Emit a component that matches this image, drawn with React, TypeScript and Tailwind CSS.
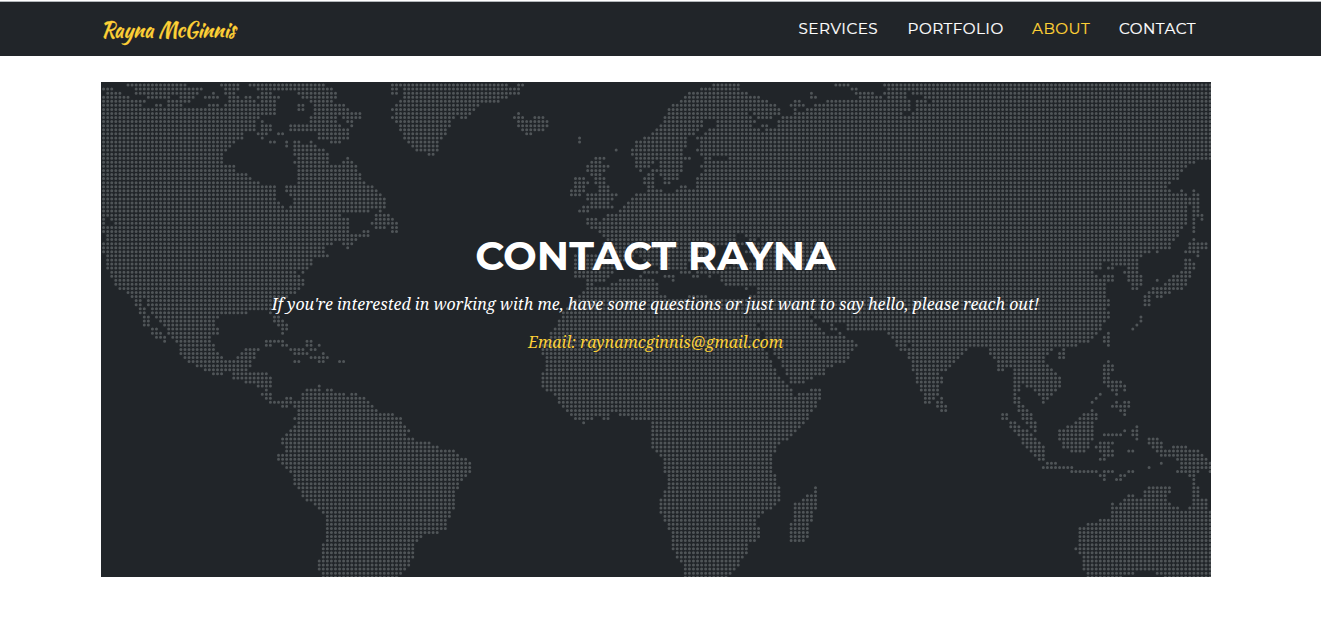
import React from "react";

type Tile = { x: number; y: number; row: number; runs: string };

const PITCH = 4.068;
const FIRST_X = 103.6;
const FIRST_Y = 85;

// Each tile lists its land spans row by row, at three units to a pixel from the tile's corner.
// Rows are separated by "/", spans by a space.
const tiles: Tile[] = [
  {
    x: 100, y: 80, row: 0,
    runs:
      "85-255 363-415 447-672 878-895/11-35 110-305 375-415 472-695 878-895/23-60 110-290 340 375-402 484-515 600-705 878-890/11-85 145-205 240-280 315-353 387-415 435-450 472-535 610-705/11-135 205-270 387-465 484-525 630-695/11-120 170-182 205-240 327-353 375-475 484-525 600-610 643-733 890/11-475 484-525 600-610 643-745 885/11-470 484-525 643-745 757-782/11-475 630-705 730-780 878-890/11-460 484 630-690 710 745-755 890/11-465 484-512 572-620 630-720 757/11-465 490-512 572-615 632-745 900/11-430 472-500 535-547 655-745/11-425 487 657-745/11-400 510-522 560 585-600 633 695-720/11-390 560 585-645/11-378 585-672/11-366 585-685/11-366 597-685 743/11-366 585-685 730-757/11-402 597-770/11-402 597-770/11-440 597-782/11-452 597-782/11-475 597-795/11-525 560-820/11-525 560-830/11-525 572-843/11-525 585-855/11-537 580-855/11-550 572-855/11-805 843/11-720 828-868/11 35-745 828-880/11 45-745 815-890/11-745 828-855 878-890/11-745 790-805 878-890/23-805/23-770/11-695 730-755",
  },
  {
    x: 380, y: 80, row: 0,
    runs:
      "37-380 415-427/37-50 72-420/37-50 72-415/72-380/60-355/48-295 880-895/37-285 868-895/48-270 415 868-895/37-220 245-258 403-427 464-490 856-895/48-208 415-500 856-895/60-208 415-500 844-895/60-195 427-490 832-895/72-195 440-452 820-895/72-183 598 795-895/84-172 598 770-895/96-172 770-895/108-172 709 758-895/147-160 758-895/648-672 770-895/636-660 770-820 844-895/623-685 770-808 844-895/623-672 782 820-895/636-660 808-820 844-895/587-610 648-672 795-820 856-890/587-623 648-672 795-820 856-865/587-610 660-685 808-820/575-610 660-685 808-845 890/575-598 623-709 770-895/623-697 758-895/636-685 745-895/611-697 733-895/598-623 721-895/685-895/623-650 672-895/623-895/636-895/660-895/672-895/684-895/700-895",
  },
  {
    x: 640, y: 80, row: 0,
    runs:
      "220-295 587-625 733-900/183-295 636-650 745-810 820-900/147-320 514 648-700 733-800 820-900/135-355 514-526 660-725 745-800 855-900/123-380 465-480 563-575 587-810 830-860 880-900/98-405 453-490 526-810 830-900/86-415 465 500-810 830-900/86-320 343-415 465-780 820-900/74-330 355-395 428-900/74-183 232-330 345 415-900/62-183 232-335 370-380 415-900/50-170 208-355 380-900/38-160 195-900/14-135 172-900/2-130 183-900/2-130 183-900/2-123 172 185-900/2-123 183-900/2-135 148 195-205 270-900/2-40 62-123 195-900/2-25 62-123 183-900/38-50 62-123 195 208-900/25-40 62-110 183-900/14-40 74-110 172-900/14-40 74-85 172-900/25-40 123-135 172-900/25-62 110-900/2-900/2-900/2-900/2-900/2-900/2-900/2-900/2-900/2-900/2-900/2-287 325-360 372-900/2-287 330-345 372-900/2-320 345-900",
  },
  {
    x: 920, y: 80, row: 0,
    runs:
      "2-870/2-870/2-870/12-870/2-20 40-870/2-870/2-870/2-870/2-870/2-870/2-870/2-870/2-870/2-870/2-870/2-870/2-870/2-870/2-870/2-822/2-797/2-785/2-775/2-772/2-748/2-740/2-748 785 822/2-797 822-834/2-797 810-834/2-797 810-834/2-797 822-834/2-797 822-834/2-797 822-846/2-797 822 846/2-797 822/2-785 822/2-775 822/2-772/2-760 822/2-750 808-860",
  },
  {
    x: 100, y: 240, row: 40,
    runs:
      "11-672 743/11-672/23-685/23-635/23-635/23-622/35-585 610/35-597/47-610/47-610/60-600/84-585/96-560/108-120 145-550/108-120 145-520/120-135 157-520/120-135 157-440 510/133-150 170-350 522-535/133-147 182-345 522-547/133-147 195-345 535-560/157-170 205-353 547-560/157-182 205-353 547/170-195 218-330/195 230-330 498-547 620-632/242-340 498-510 547-560 620-632 657/242-340 437-475 572-610 632-645/242-353 425-462 585-622 670/254-366 413-462 632-682/266-450 585-597 657-670 718-730/291-450/315-440/340-366 400-500/400-512/437-512/475-512 657/498 620-660 682-695/487-510 608-645 657-735 755-767/498-510 560-572 608-795/510-807/547-560 585-820",
  },
  {
    x: 400, y: 220, row: 39,
    runs:
      "610-1000 1060-1325/610-940 1000-1010 1070-1325/610-920 1040-1325/525-700 720-920 1060-1325/525-690 740-920 1080-1325/525-660 700-710 760-860 1000-1325/525-650 715-725 780-850 890-1325/525-640 740-770 840-870 890-1325/525-630 722 795-820 880-890 930 965-1325/562-610 660-760 820 965-1325/562-580 635-770 977-1010 1025-1325/562-765 1040 1075-1325/550-770 1075-1325/537-800 870-920 1050-1325/520-1325/510-1325/500-1325/488-1220 1235-1325/488-1060 1075-1225 1250-1325/476-1060 1075-1240 1270-1325/476-1062 1085-1245 1290-1300/464-1070 1090-1260 1290-1310/452-1075 1098-1270 1320/452-1080 1100-1325/440-1085 1110-1345/428-1085 1115-1350/428-1090 1120-1345/428-1095 1130-1345/440-1100 1135-1335/440-1110 1145-1320/440-1110 1150-1300/440-1120 1160-1275",
  },
  {
    x: 840, y: 220, row: 39,
    runs:
      "6-990 1050-1100/6-990 1050-1100/6-930 950 1038-1075/6-905 1075/6-892 1038-1050/6-783 820-892 1038-1062/6-783 808-820 868-892 1038-1062/6-758 856-892 1026-1050/6-770 795-820 868-905 1001-1050/6-783 795-820 868-905 952 989-1038/6-795 880-905 977-1038/6-795 880-892 940-1026/6-795 928-989/6-795 916-928 952-965/6-807 916-928/6-807 916-928/6-795/6-807/6-807 905/6-795 905/24-783 892/24-783 880/0 146-770 807/0-10 158-758 795-807/0-36 170-746 795-807/0-48 170-190 219-430 445-710 807/0-36 182-195 207-380 450-635 665/0-24 207-370 450-625 660-672/0-24 207-355 462-612 660-672/0-12 219-343 475-612 807/219-330 475-625 795-820/219-318 475-490 525-637 795-820/231-295 525-650 795-807/231-306 525-660 795-807/231-306/243-295/243-295/255-295/255-282 306/255-268 295-306/295-318/306-318",
  },
  {
    x: 250, y: 380, row: 78,
    runs:
      "60-355/97-110 133-370/145-380/145-430/133-455/145-455/133-465/121-475/109-465/97-490/97-540/109-563/109-612/85-624/85-648/97-660/109-660/121-660/133-648/133-636/133-624/145-624/157-612/157-612/170-612/194-612/206-612/218-600/230-600/230-588/230-588/230-588/230-563/230-515/230-503/218-491/218-491/218-491/218-491/206-479/206-479/206-467/218-455/218-440",
  },
  {
    x: 530, y: 370, row: 71,
    runs:
      "36-735 772-880/36-747 784-845/36-760 784-820/36-772/48-784 845-870/72-784 808-870/85-870/85-857/97-857/109-845/121-240 267-832/133-185 220-233 305-832/160 367-820/367-808/367-796/367-784/367-772/367-747/367-735/380-735/392-723/404-723/404-723/404-723/404-723/416-735/416-735/416-735/416-747 857/404-747 857/404-747 832-857/392-747 820-857/392-735 796-857/392-723 796-857/392-700 796-845/404-687 796-845/404-675 796-845/416-675 784-832/416-687 784-832/428-687 784-832/428-687 784-832/428-675 784-820/428-650/428-650/441-650/441-638/453-626/465-626/465-614/465-602/465-590",
  },
  {
    x: 960, y: 380, row: 73,
    runs:
      "165-300 433-485/165-175 202-300 445-495/165-178 225-290 457-470 494/165 237-275 421 470/165-178 250-262 409/165-178 250 397 470 494-506/178-190 457-506/178-202 397 482-494/128-140 190-214 372-409 494/128-140 190-214 360-409/153-165 202-226 348-397/153-178 214-226 323-397 530/165-202 226 299-397 494 518-530/178-214 299-397 433-485 518-530/190-226 299-397 530 567-592/190-238 311-385 421-457 567-604/202-250 311-385 409-445 580-604 641-678/214-250 336-372 421-433 445-457 506-518 592-714/226-250 433-457 604-726/238-250 421-433 653-738/262-287 604 665-750/250-336 567 665-750/336-409 433-457 506-518 653-714 750/421-433 482-494 690-702/433 470-482 702/702/567-629 702-714/555-629 702-714/506-518 555-617 702-714/494-617 702-738/457 482-629 702-738/457-653 690-738/457-750/457-750/421-750/384-750/360-750/360-750/360-750/360-750/360-750/348-750/360-750/372-750/372-750/372-750/372-750/384-520 592-750/384-480 617-750",
  },
];

function buildDots(): string {
  const cells = new Set<number>();
  for (const tile of tiles) {
    tile.runs.split("/").forEach((line, i) => {
      for (const span of line.split(" ")) {
        const [a, b = a] = span.split("-").map(Number);
        const first = Math.max(0, Math.round((tile.x + a / 3 - FIRST_X) / PITCH));
        const last = Math.max(first, Math.round((tile.x + b / 3 - FIRST_X) / PITCH));
        for (let c = first; c <= last; c++) cells.add((tile.row + i) * 1000 + c);
      }
    });
  }
  let d = "";
  cells.forEach((n) => {
    const x = FIRST_X - 101 + (n % 1000) * PITCH;
    const y = FIRST_Y - 82 + Math.floor(n / 1000) * PITCH;
    d += `M${x.toFixed(2)} ${y.toFixed(2)}h.01`;
  });
  return d;
}

const dots = buildDots();

function WorldMap() {
  return (
    <svg className="absolute inset-0" width="1110" height="495" viewBox="0 0 1110 495" aria-hidden="true">
      <path d={dots} fill="none" stroke="#505558" strokeWidth="3" strokeLinecap="round" />
    </svg>
  );
}

const links = [
  { label: "SERVICES", box: "w-[109px]", text: "text-white" },
  { label: "PORTFOLIO", box: "w-[124.5px]", text: "text-white" },
  { label: "ABOUT", box: "w-[87px]", text: "text-[#fed136]" },
  { label: "CONTACT", box: "w-[78px]", text: "text-white" },
];

export default function App() {
  return (
    <div className="h-[625px] w-full overflow-hidden bg-white">
      <header className="mt-px flex h-[55px] items-center justify-between border-t border-[#b3b7ba] bg-[#212529] pl-[101px] pr-[124px]">
        <a className="whitespace-nowrap pt-px font-['Kaushan_Script',cursive] text-[20px] leading-none text-[#fed136] [-webkit-text-stroke:0.3px_#fed136]">
          Rayna McGinnis
        </a>
        <nav className="flex font-['Montserrat',sans-serif] text-[15.2px] leading-6 tracking-[0.5px] [-webkit-text-stroke:0.2px_currentColor]">
          {links.map((l) => (
            <div key={l.label} className={l.box}>
              <a className={"inline-block whitespace-nowrap " + l.text}>{l.label}</a>
            </div>
          ))}
        </nav>
      </header>
      <main className="relative ml-[101px] mt-[26px] h-[495px] w-[1110px] overflow-hidden bg-[#212529]">
        <WorldMap />
        <div className="relative flex flex-col items-center whitespace-nowrap pr-px pt-[149px]">
          <h2 className="font-['Montserrat',sans-serif] text-[40px] font-bold leading-[50px] tracking-[0.1px] text-white">
            CONTACT RAYNA
          </h2>
          <p className="mt-[11px] font-['Droid_Serif','Noto_Serif','DejaVu_Serif',serif] text-[16px] italic leading-6 text-white">
            If you're interested in working with me, have some questions or just want to say hello, please reach out!
          </p>
          <p className="mt-[14px] font-['Droid_Serif','Noto_Serif','DejaVu_Serif',serif] text-[16px] italic leading-6 text-[#fed136]">
            Email: raynamcginnis@gmail.com
          </p>
        </div>
      </main>
    </div>
  );
}
